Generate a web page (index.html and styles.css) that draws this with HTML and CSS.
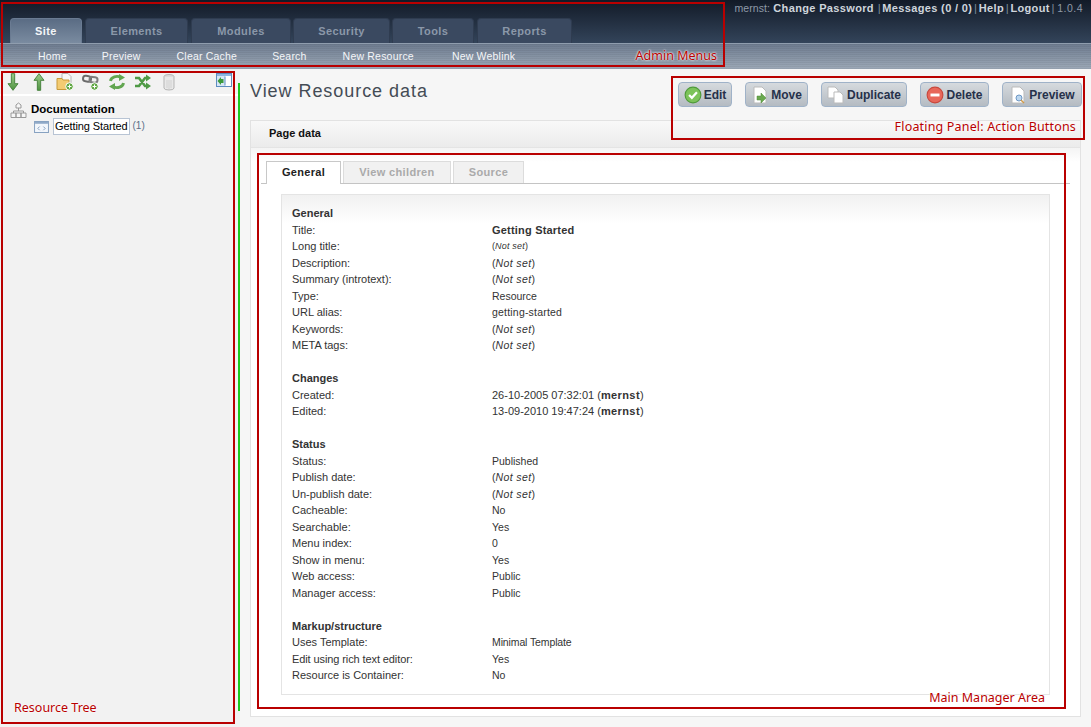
FILE: index.html
```html
<!DOCTYPE html>
<html lang="en">
<head>
<meta charset="utf-8">
<title>View Resource data</title>
<link rel="stylesheet" href="styles.css">
</head>
<body>
<header class="top">
  <div class="userbar"><span class="dim">mernst:</span> <a class="first">Change Password</a> <i>|</i> <a>Messages (0 / 0)</a> <i>|</i> <a>Help</a> <i>|</i> <a>Logout</a> <i>|</i> <span class="dim ver">1.0.4</span></div>
  <nav class="tabs">
    <a class="tab active t-site">Site</a>
    <a class="tab t-elements">Elements</a>
    <a class="tab t-modules">Modules</a>
    <a class="tab t-security">Security</a>
    <a class="tab t-tools">Tools</a>
    <a class="tab t-reports">Reports</a>
  </nav>
  <nav class="subnav">
    <a>Home</a><a>Preview</a><a>Clear Cache</a><a>Search</a><a>New Resource</a><a>New Weblink</a>
  </nav>
</header>
<div class="body-row">
  <aside class="tree">
    <div class="tree-tools">
      <svg class="ti" viewBox="0 0 18 16"><defs><linearGradient id="g" x1="0" y1="0" x2="0" y2="1"><stop offset="0" stop-color="#9ccb8c"/><stop offset="1" stop-color="#4f9440"/></linearGradient></defs><path d="M7.500 .5h3v9h3L9 15.500 4.500 9.500h3z" fill="url(#g)" stroke="#3f7d36" stroke-width=".8"/></svg>
      <svg class="ti" viewBox="0 0 18 16"><path d="M7.500 15.500h3v-9h3L9 .5 4.500 6.500h3z" fill="url(#g)" stroke="#3f7d36" stroke-width=".8"/></svg>
      <svg class="ti" viewBox="0 0 18 18"><path d="M6 .5h6l3 3V11H6z" fill="#f8f8f8" stroke="#b5b5b5"/><path d="M1 5.500h5l1 1.500h6v9.500H1z" fill="#f3cb72" stroke="#c79a3a"/><circle cx="13.500" cy="13.500" r="3.800" fill="#62a845" stroke="#fff"/><path d="M11.500 13.500h4M13.500 11.500v4" stroke="#fff"/></svg>
      <svg class="ti" viewBox="0 0 18 18"><rect x="1" y="3" width="8" height="5.500" rx="2.700" fill="none" stroke="#6b6b6b" stroke-width="2" transform="rotate(8 5 6)"/><rect x="7.500" y="4" width="8" height="5.500" rx="2.700" fill="none" stroke="#7d7d7d" stroke-width="2" transform="rotate(8 11 7)"/><circle cx="12.500" cy="13.500" r="3.800" fill="#62a845" stroke="#fff"/><path d="M10.500 13.500h4M12.500 11.500v4" stroke="#fff"/></svg>
      <svg class="ti" viewBox="0 0 18 18"><path d="M2.500 8a6.500 5 0 0 1 10.500-3.500" fill="none" stroke="#62a650" stroke-width="2.800"/><path d="M11 1l6 3.500-6 3.500z" fill="#62a650"/><path d="M15.500 10a6.500 5 0 0 1-10.500 3.500" fill="none" stroke="#62a650" stroke-width="2.800"/><path d="M7 17l-6-3.500 6-3.500z" fill="#62a650"/></svg>
      <svg class="ti" viewBox="0 0 18 18"><path d="M1 5h4l6 8h2M1 13h4l6-8h2" fill="none" stroke="#4f9a45" stroke-width="2.600"/><path d="M12 1.500l5 3.500-5 3.500zM12 9.500l5 3.500-5 3.500z" fill="#4f9a45"/></svg>
      <svg class="ti" viewBox="0 0 18 18"><ellipse cx="9" cy="3.500" rx="5" ry="2" fill="#dcdcdc" stroke="#b5b5b5"/><path d="M4 4v11a5 2 0 0 0 10 0V4" fill="#e8e8e8" stroke="#b5b5b5"/><path d="M7 7v8M9 7v9M11 7v8" stroke="#d2d2d2"/></svg>
      <svg class="collapse" viewBox="0 0 16 14"><rect x=".5" y=".5" width="15" height="13" fill="#fff" stroke="#5d8cc0"/><rect x="1" y="1" width="14" height="2" fill="#8fb6e0"/><rect x="1" y="3" width="8" height="10" fill="#d6e6f5"/><path d="M9 3.500v9" stroke="#5d8cc0"/><path d="M7.500 6v4H5v2L1.500 8 5 4v2z" fill="#3c9a3c"/></svg>
    </div>
    <div class="node root">
      <svg class="node-ic" viewBox="0 0 17 16"><path d="M8.500 1L11 3v3H6V3zM1 11h5v4.500H1zM6 11h5v4.500H6zM11 11h5v4.500h-5zM8.500 6v3M3.500 11V9h10v2" fill="#f6f6f6" stroke="#999"/></svg>
      <b>Documentation</b>
    </div>
    <div class="node leaf">
      <svg class="leaf-ic" viewBox="0 0 16 13"><rect x=".5" y=".5" width="15" height="12" fill="#f2f6fb" stroke="#7f9bbd"/><rect x="1" y="1" width="14" height="2" fill="#8fa9c8"/><path d="M6 6L4 8l2 2M10 6l2 2-2 2" fill="none" stroke="#7f9bbd"/></svg>
      <span class="leaf-name">Getting Started</span> <span class="count">(1)</span>
    </div>
  </aside>
  <div class="splitter"></div>
  <main class="manager">
    <div class="title-row">
      <h1>View Resource data</h1>
      <div class="actions">
        <a class="btn b-edit"><svg viewBox="0 0 16 16"><circle cx="8" cy="8" r="7" fill="#7cc35a" stroke="#4f9a3a"/><path d="M4.500 8l2.500 2.500 4.500-5" fill="none" stroke="#fff" stroke-width="2"/></svg>Edit</a>
        <a class="btn b-move"><svg viewBox="0 0 16 18"><path d="M2 1h8l4 4v12H2z" fill="#fff" stroke="#bbb"/><path d="M5 10h4V7l5 5-5 5v-3H5z" fill="#6aa84f" stroke="#4d8a37" stroke-width=".5"/></svg>Move</a>
        <a class="btn b-dup"><svg viewBox="0 0 18 18"><path d="M1 1h7l3 3v8H1z" fill="#fff" stroke="#bbb"/><path d="M7 6h6l3 3v8H7z" fill="#fff" stroke="#bbb"/></svg>Duplicate</a>
        <a class="btn b-del"><svg viewBox="0 0 16 16"><circle cx="8" cy="8" r="7" fill="#e8675a" stroke="#c8483c"/><rect x="4" y="6.700" width="8" height="2.600" fill="#fff"/></svg>Delete</a>
        <a class="btn b-prev"><svg viewBox="0 0 16 18"><path d="M2 1h8l4 4v12H2z" fill="#fff" stroke="#bbb"/><circle cx="9" cy="12" r="3" fill="#bcd7f0" stroke="#6d97c4"/><path d="M11 14l3 3" stroke="#d09a4a" stroke-width="1.500"/></svg>Preview</a>
      </div>
    </div>
    <section class="panel">
      <div class="panel-head">Page data</div>
      <div class="panel-body">
        <div class="subtabs">
          <a class="subtab on st-gen"><span>General</span></a>
          <a class="subtab st-view">View children</a>
          <a class="subtab st-src">Source</a>
        </div>
        <div class="sheet">
          <h3>General</h3>
          <dl class="rows">
            <dt>Title:</dt><dd class="strong">Getting Started</dd>
            <dt>Long title:</dt><dd class="small">(<em>Not set</em>)</dd>
            <dt>Description:</dt><dd>(<em>Not set</em>)</dd>
            <dt>Summary (introtext):</dt><dd>(<em>Not set</em>)</dd>
            <dt>Type:</dt><dd>Resource</dd>
            <dt>URL alias:</dt><dd class="alias">getting-started</dd>
            <dt>Keywords:</dt><dd>(<em>Not set</em>)</dd>
            <dt>META tags:</dt><dd>(<em>Not set</em>)</dd>
          </dl>
          <h3>Changes</h3>
          <dl class="rows">
            <dt>Created:</dt><dd class="date">26-10-2005 07:32:01 (<b>mernst</b>)</dd>
            <dt>Edited:</dt><dd class="date">13-09-2010 19:47:24 (<b>mernst</b>)</dd>
          </dl>
          <h3>Status</h3>
          <dl class="rows">
            <dt>Status:</dt><dd>Published</dd>
            <dt>Publish date:</dt><dd>(<em>Not set</em>)</dd>
            <dt>Un-publish date:</dt><dd>(<em>Not set</em>)</dd>
            <dt>Cacheable:</dt><dd>No</dd>
            <dt>Searchable:</dt><dd>Yes</dd>
            <dt>Menu index:</dt><dd>0</dd>
            <dt>Show in menu:</dt><dd>Yes</dd>
            <dt>Web access:</dt><dd>Public</dd>
            <dt>Manager access:</dt><dd>Public</dd>
          </dl>
          <h3>Markup/structure</h3>
          <dl class="rows">
            <dt>Uses Template:</dt><dd class="tmpl">Minimal Template</dd>
            <dt class="tight">Edit using rich text editor:</dt><dd>Yes</dd>
            <dt>Resource is Container:</dt><dd>No</dd>
          </dl>
        </div>
      </div>
    </section>
  </main>
</div>
<div class="anno a-menus"><span>Admin Menus</span></div>
<div class="anno a-tree"><span>Resource Tree</span></div>
<div class="anno a-float"><span>Floating Panel: Action Buttons</span></div>
<div class="anno a-main"><span>Main Manager Area</span></div>
</body>
</html>
```
FILE: styles.css
```css
* { box-sizing: border-box; }
html, body { margin: 0; height: 100%; overflow: hidden; }
body {
  position: relative;
  display: flex;
  flex-direction: column;
  font: 11px/16.5px "Liberation Sans", Arial, sans-serif;
  color: #333;
  background: #f6f6f6;
}
.top {
  position: relative;
  height: 69px;
  flex: none;
  display: flex;
  flex-direction: column;
  justify-content: flex-end;
  background: linear-gradient(#121a27, #33445a 43px);
}
.userbar {
  position: absolute;
  top: 0;
  right: 8px;
  font-size: 11.500px;
  line-height: 16px;
  color: #7d8a99;
}
.userbar a { color: #cfd5dc; font-weight: bold; font-size: 11px; letter-spacing: .35px; }
.userbar a.first { margin-right: 2px; }
.userbar i { font-style: normal; color: #7d8a99; margin: 0 -1.500px; }
.userbar .dim { color: #8f9aa8; font-size: 10.500px; letter-spacing: .1px; }
.userbar .ver { letter-spacing: .5px; margin-left: 1px; }
.tabs {
  display: flex;
  height: 25px;
  padding-left: 10px;
  gap: 3px;
}
.tab {
  display: flex;
  align-items: center;
  justify-content: center;
  height: 25px;
  border-radius: 4px 4px 0 0;
  background: #3a4960;
  border: 1px solid #2f3c50;
  border-bottom: 0;
  color: #8b98a9;
  font-size: 11px;
  font-weight: bold;
  letter-spacing: .4px;
}
.tab.active {
  background: linear-gradient(#5a6c84, #7a8ba0);
  border-color: #6a7b92;
  color: #f4f6f8;
}
.t-site { width: 72px; }
.t-elements { width: 103px; }
.t-modules { width: 100px; }
.t-security { width: 97px; margin-left: -1px; }
.t-tools { width: 82px; margin-left: -1px; }
.t-reports { width: 95px; }
.subnav {
  display: flex;
  height: 26px;
  align-items: center;
  padding-left: 20px;
  border-top: 1px solid #8f9dae;
  background:
    repeating-linear-gradient(rgba(0, 0, 0, .05) 0 1px, transparent 1px 2px),
    linear-gradient(#6e7c90, #9da9b7);
  color: #f4f6f8;
  font-size: 10.500px;
  letter-spacing: .2px;
}
.subnav a { padding: 0 18px; }
.subnav a:first-child { padding-right: 17px; }
.subnav a:nth-child(3) { padding-right: 17px; }
.subnav a:nth-child(5) { padding-right: 20px; }
.body-row { flex: 1; min-height: 0; display: flex; }
.tree {
  width: 238px;
  flex: none;
  background: #f2f2f2;
  padding-top: 2px;
  color: #000;
}
.tree-tools {
  display: flex;
  align-items: center;
  height: 25px;
  padding-left: 3px;
  border-bottom: 2px solid #fff;
  gap: 6px;
}
.ti { width: 20px; height: 18px; position: relative; top: -1px; }
.collapse { width: 16px; height: 14px; margin-left: 31px; position: relative; top: -3px; }
.node { display: flex; align-items: center; }
.root { height: 17px; margin-top: 5px; padding-left: 10px; font-size: 11.500px; gap: 4px; }
.node-ic { width: 17px; height: 16px; }
.leaf { height: 17px; padding-left: 34px; gap: 4px; }
.leaf-ic { width: 15px; height: 12px; }
.leaf-name { border: 1px solid #b8c4d4; background: #fff; padding: 0 1px; line-height: 15px; letter-spacing: -.1px; }
.count { color: #5b6f88; font-size: 10px; margin-left: -1px; }
.splitter {
  width: 2px;
  flex: none;
  background: linear-gradient(#f2f2f2 14px, #1ec81e 14px, #1ec81e calc(100% - 16px), #f2f2f2 calc(100% - 16px));
}
.manager {
  flex: 1;
  min-width: 0;
  display: flex;
  flex-direction: column;
  padding: 13px 10px 10px 10px;
}
.title-row { display: flex; justify-content: space-between; height: 38px; }
h1 {
  margin: 0;
  font-size: 18px;
  font-weight: normal;
  line-height: 18px;
  letter-spacing: .95px;
  color: #444c55;
}
.actions { display: flex; gap: 13px; height: 25px; margin-right: -1px; }
.btn {
  display: flex;
  align-items: center;
  justify-content: center;
  gap: 2px;
  height: 25px;
  padding-top: 1px;
  border: 1px solid #9fb2c8;
  border-radius: 4px;
  background: linear-gradient(#d6dade, #b4bbc2);
  font-size: 12px;
  font-weight: bold;
  color: #26314a;
}
.btn svg { width: 18px; height: 18px; flex: none; }
.b-edit { width: 54px; }
.b-move { width: 63px; }
.b-dup { width: 86px; }
.b-del { width: 69px; }
.b-prev { width: 80px; }
.panel {
  flex: 1;
  min-height: 0;
  display: flex;
  flex-direction: column;
  border: 1px solid #e2e2e2;
  background: #fff;
}
.panel-head {
  height: 27px;
  flex: none;
  padding-left: 18px;
  line-height: 25px;
  font-weight: bold;
  color: #111;
  background: linear-gradient(#f8f8f8, #ebebeb);
  border-bottom: 1px solid #e4e4e4;
}
.panel-body { flex: 1; padding: 13px 10px 0; background: linear-gradient(#f4f4f4, #fff 14px); }
.subtabs {
  display: flex;
  gap: 2px;
  height: 23px;
  padding-left: 5px;
  border-bottom: 1px solid #c4c4c4;
}
.subtab {
  display: flex;
  align-items: center;
  justify-content: center;
  height: 22px;
  border: 1px solid #dcdcdc;
  border-bottom: 0;
  background: #f1f1f1;
  color: #aaa;
  font-weight: bold;
  letter-spacing: .35px;
}
.subtab.on {
  height: 23px;
  padding-bottom: 1px;
  background: #fff;
  border-color: #c8c8c8;
  color: #222;
  letter-spacing: .3px;
}
.st-gen { width: 75px; }
.st-view { width: 108px; }
.st-src { width: 71px; }
.sheet {
  margin: 10px 20px 0;
  height: 501px;
  padding: 10px 10px 0;
  border: 1px solid #e4e4e4;
  background: linear-gradient(#f1f1f1, #fff 28px);
}
.sheet h3 { margin: 0; font-size: 11px; line-height: 16.500px; font-weight: bold; color: #333; }
.rows {
  display: grid;
  grid-template-columns: 200px 1fr;
  grid-auto-rows: 16.500px;
  margin: 0 0 16.500px;
}
.rows dt, .rows dd { margin: 0; white-space: nowrap; }
.rows dd { font-size: 10.500px; }
.rows em { letter-spacing: .4px; }
.rows dd.strong { font-size: 11px; font-weight: bold; color: #333; letter-spacing: .2px; }
.rows dd.small { font-size: 9px; }
.rows dd.small em { letter-spacing: .2px; }
.rows dd.alias { letter-spacing: .2px; }
.rows dd.date { font-size: 11px; }
.rows dd.date b { letter-spacing: .4px; }
.rows dd.tmpl { letter-spacing: -.12px; }
.rows dt.tight { letter-spacing: -.1px; }
.anno {
  position: absolute;
  border: 2px solid #b90000;
  pointer-events: none;
  display: flex;
  align-items: flex-end;
  justify-content: flex-end;
}
.anno span {
  font: 12.500px/15px "Noto Sans", Tahoma, sans-serif;
  color: #b90000;
  text-shadow: 0 0 2px #fff, 0 0 2px #fff;
}
.a-menus { left: 1px; top: 2px; width: 724px; height: 65px; padding: 0 6px 2px 0; }
.a-tree { left: 1px; top: 71px; width: 234px; height: 653px; padding: 0 0 7px 11px; justify-content: flex-start; }
.a-float { left: 671px; top: 76px; width: 414px; height: 64px; padding: 0 7px 4px 0; }
.a-float span { letter-spacing: .17px; }
.a-main { left: 257px; top: 153px; width: 809px; height: 556px; padding: 0 19px 2px 0; }
```
